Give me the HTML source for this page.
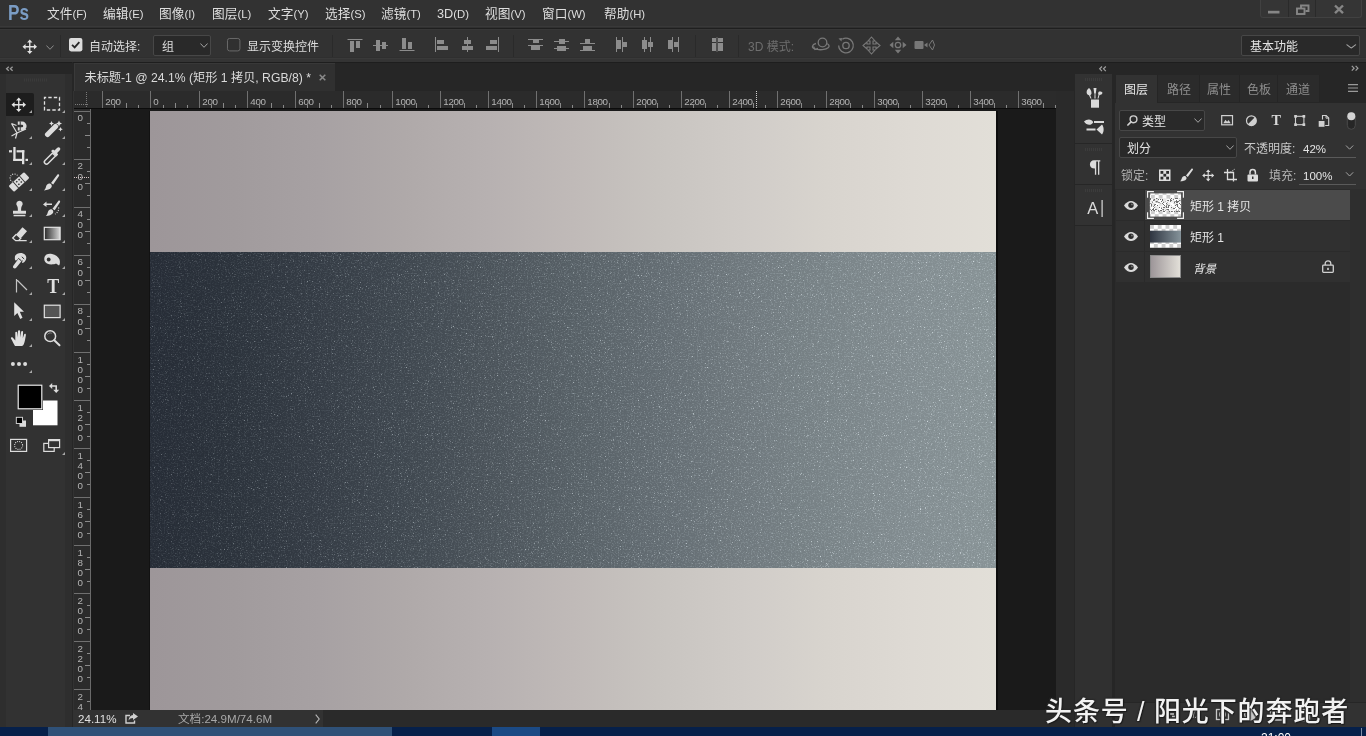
<!DOCTYPE html>
<html lang="zh-CN">
<head>
<meta charset="utf-8">
<title>Photoshop</title>
<style>
*{box-sizing:border-box;margin:0;padding:0}
html,body{width:1366px;height:736px;overflow:hidden;background:#323232}
body{position:relative;font-family:"Liberation Sans","Noto Sans CJK SC",sans-serif;font-size:12px;color:#d6d6d6;line-height:1}
.abs,.abs div,.abs svg,.abs i,.abs b,.abs span{position:absolute}
svg{display:block;overflow:visible}
.t{white-space:nowrap;line-height:16px;height:16px}
body>div{will-change:transform}
/* ===== menu bar ===== */
#menubar{left:0;top:0;width:1366px;height:28px;background:linear-gradient(180deg,#323232 0 26px,#393939 26px 27px,#303030 27px)}
#menubar .ps{left:7.500px;top:.5px;font-size:22px;font-weight:bold;color:#7a9cc4;line-height:24px;transform:scaleX(.78);transform-origin:0 0}
#menubar .mi{top:5.5px;font-size:12.7px;color:#dedede}
#menubar .mi small{font-size:11.3px}
#winctl{left:1260px;top:0;width:102px;height:18px;background:#353535;border:1px solid #414141;border-top:none;border-radius:0 0 3px 3px}
#winctl i{top:0;width:1px;height:17px;background:#2a2a2a}
/* ===== options bar ===== */
#optbar{left:0;top:28px;width:1366px;height:34px;background:linear-gradient(180deg,#373737 0 1px,#323232 1px 28px,#2f2f2f 28px 29px,#393939 29px 30px,#343434 30px);border-top:1px solid #1f1f1f}
#optbar .sep{top:6px;width:1px;height:22px;background:#2a2a2a;border-right:0}
#optbar .lbl{top:10px;font-size:12px;color:#dcdcdc}
.dd{background:#292929;border:1px solid #474747;border-radius:2px}
/* ===== tools ===== */
#tools{left:0;top:62px;width:73px;height:665px;background:#323232}
#tools .hdr{left:0;top:0;width:73px;height:12px;background:#262626;border-top:1px solid #1e1e1e}
#tools .sel{left:4px;top:31px;width:30px;height:23px;background:#1d1d1d;border-radius:2px}
/* ===== doc area ===== */
#tabwell{left:73px;top:62px;width:1001px;height:29px;background:#262626;border-top:1px solid #1e1e1e}
#tab{left:74px;top:63px;width:261px;height:28px;background:#303030;border-left:1px solid #3a3a3a;border-top:1px solid #383838}
#tab .t{left:9.5px;top:5.5px;font-size:12.2px;color:#dadada}
#hruler{left:74px;top:91px;width:982px;height:18px;background:#2b2b2b;overflow:hidden;border-bottom:1px solid #0c0c0c}
#vruler{left:74px;top:109px;width:17px;height:601px;background:#2b2b2b;overflow:hidden;border-right:1px solid #6a6a6a}
#hruler b,#vruler b{background:#8a8a8a;display:block}
#hruler span,#vruler span{font-size:9.8px;color:#b4b4b4;line-height:10px;font-weight:normal;letter-spacing:-.35px}
#canvas{left:91px;top:109px;width:965px;height:601px;background:#1a1a1a}
#doc{left:150px;top:111px;width:846px;height:599px;box-shadow:2px 0 0 #0d0d0d,-1px 0 0 #121212;background:linear-gradient(90deg,#9d9699 0%,#a19b9d 10%,#a7a1a3 20%,#afa9a9 30%,#b7b1b1 40%,#c0bab8 50%,#c8c4c0 60%,#d0ccc8 70%,#d8d4ce 80%,#dedad4 90%,#e2dfd8 100%)}
#band{left:0;top:141px;width:846px;height:316px;background:linear-gradient(90deg,#262c36 0%,#2c333c 10%,#353c45 20%,#3f474f 30%,#4b535a 40%,#576066 50%,#636c72 60%,#6f787d 70%,#798387 80%,#828c90 90%,#889396 100%)}
#vscroll{left:1056px;top:91px;width:18px;height:619px;background:#2a2a2a}
#status{left:74px;top:709.5px;width:1000px;height:17.5px;background:#2a2a2a}
#status .lt{left:0;top:0;width:249px;height:17px;background:#323232}
#status .t{font-size:11.6px;top:1px}
/* ===== right ===== */
#rwell{left:1074px;top:62px;width:292px;height:665px;background:#262626;border-top:1px solid #1e1e1e}
#icol{left:1075px;top:74px;width:37px;height:653px;background:#303030}
#icol .g{left:0;width:37px;background:#323232;border-bottom:1px solid #262626}
#icol .grip{left:10px;top:4px;width:17px;height:3px;background:repeating-linear-gradient(90deg,#3c3c3c 0 1px,transparent 1px 2px)}
#lpanel{left:1115px;top:74px;width:251px;height:653px;background:#2b2b2b}
#lpanel .tabs{left:0;top:0;width:251px;height:29px;background:#262626}
#lpanel .tb{top:1px;height:27px;background:#2b2b2b;border-right:1px solid #252525}
#lpanel .tb.on{background:#323232;height:28px}
#lpanel .tb .t{top:6.5px;font-size:12px;color:#8e8e8e}
#lpanel .tb.on .t{color:#e6e6e6}
#lpanel .ctl{left:0;top:29px;width:251px;height:86px;background:#323232}
#lpanel .lbl{font-size:12px;color:#c8c8c8}
#lpanel .row{left:1px;width:234px;height:30px;background:#303030}
#lpanel .row .eye{left:0;top:0;width:29px;height:30px;border-right:1px solid #2a2a2a}
#lpanel .row .nm{left:74px;top:9px;font-size:12px;color:#e4e4e4}
#lpanel .row.on{background:linear-gradient(90deg,#303030 0 29px,#4b4b4b 29px)}
#lpanel .sb{left:235px;top:115px;width:16px;height:513px;background:#2e2e2e}
#lpanel .foot{left:0;top:628px;width:251px;height:25px;background:#323232;border-top:1px solid #262626}
/* ===== taskbar ===== */
#taskbar{left:0;top:727px;width:1366px;height:9px;background:#06204a}
#wm{left:1044.500px;top:695.800px;font-size:27px;letter-spacing:.9px;line-height:32px;font-weight:500;color:#f2f2f2;white-space:nowrap;text-shadow:1px 1px 1px #1a1a1a,-1px -1px 1px #2a2a2a,1px -1px 1px #2a2a2a,-1px 1px 1px #2a2a2a}
</style>
</head>
<body>
<div id="menubar" class="abs">
  <div class="ps">Ps</div>
  <div class="mi t" style="left:47px">文件<small>(F)</small></div>
  <div class="mi t" style="left:103px">编辑<small>(E)</small></div>
  <div class="mi t" style="left:159px">图像<small>(I)</small></div>
  <div class="mi t" style="left:212px">图层<small>(L)</small></div>
  <div class="mi t" style="left:268px">文字<small>(Y)</small></div>
  <div class="mi t" style="left:325px">选择<small>(S)</small></div>
  <div class="mi t" style="left:381px">滤镜<small>(T)</small></div>
  <div class="mi t" style="left:437px">3D<small>(D)</small></div>
  <div class="mi t" style="left:485px">视图<small>(V)</small></div>
  <div class="mi t" style="left:542px">窗口<small>(W)</small></div>
  <div class="mi t" style="left:604px">帮助<small>(H)</small></div>
</div>
<div id="winctl" class="abs">
  <i style="left:27px"></i><i style="left:54px"></i>
  <svg style="left:-1px;top:0" width="103" height="18" viewBox="0 0 103 18">
    <rect x="8" y="10.800" width="11.500" height="2.700" fill="#868686"/>
    <g fill="none" stroke="#868686" stroke-width="1.900">
      <rect x="37" y="8.500" width="7.500" height="5.500"/>
      <path d="M41 8V5.500h7.500v5.500h-3"/>
    </g>
    <path d="M75 5.500l8 7.600M83 5.500l-8 7.600" stroke="#868686" stroke-width="2.400" fill="none"/>
  </svg>
</div>
<svg width="0" height="0" style="position:absolute">
  <defs>
    <symbol id="mv" viewBox="0 0 16 16"><path d="M8 .5l2.800 3.200h-2.100v3.600h3.600v-2.100L15.500 8l-3.200 2.800v-2.100h-3.600v3.600h2.100L8 15.500l-2.800-3.200h2.100v-3.600h-3.600v2.100L.5 8l3.200-2.800v2.100h3.600v-3.600h-2.100z"/></symbol>
    <symbol id="chev" viewBox="0 0 8 5"><path d="M.4.500L4 4.300 7.600.500" fill="none" stroke-width="1"/></symbol>
    <symbol id="eye" viewBox="0 0 14 9"><path d="M0 4.500C2 1.500 4.500 0 7 0s5 1.500 7 4.500C12 7.500 9.500 9 7 9S2 7.500 0 4.500z" fill="#dadada"/><circle cx="7" cy="4.300" r="2.700" fill="#2c2c2c"/><circle cx="7.900" cy="3.400" r=".9" fill="#777"/></symbol>
  </defs>
</svg>
<div id="optbar" class="abs">
  <svg style="left:22px;top:9.500px" width="15.500" height="15.500" fill="#e2e2e2"><use href="#mv"/></svg>
  <svg style="left:45.500px;top:16px" width="8" height="5" stroke="#8c8c8c"><use href="#chev"/></svg>
  <div class="sep" style="left:60px"></div>
  <svg style="left:68.800px;top:9px" width="13.400" height="13.400" viewBox="0 0 14 14"><rect width="14" height="14" rx="2.200" fill="#dcdcdc"/><path d="M3.200 7.200l2.700 2.700 4.900-5.600" fill="none" stroke="#262626" stroke-width="1.900"/></svg>
  <div class="lbl t" style="left:89px">自动选择:</div>
  <div class="dd" style="left:153px;top:6px;width:58px;height:21px"></div>
  <div class="lbl t" style="left:162px">组</div>
  <svg style="left:199.500px;top:14px" width="8" height="5" stroke="#a4a4a4"><use href="#chev"/></svg>
  <svg style="left:227px;top:9px" width="13.400" height="13.400" viewBox="0 0 14 14"><rect x=".5" y=".5" width="13" height="13" rx="2.200" fill="#303030" stroke="#6c6c6c"/></svg>
  <div class="lbl t" style="left:247px">显示变换控件</div>
  <div class="sep" style="left:332px"></div>
  <svg style="left:0;top:0" width="960" height="34" viewBox="0 29 960 34" fill="#8c8c8c">
    <!-- align top / vcenter / bottom -->
    <rect x="347.500" y="39" width="15" height="1"/><rect x="350" y="41" width="4" height="11"/><rect x="356" y="41" width="4" height="7"/>
    <rect x="373" y="45" width="15" height="1"/><rect x="376" y="40" width="4" height="11"/><rect x="382" y="42" width="4" height="7"/>
    <rect x="399.500" y="50" width="15" height="1"/><rect x="402" y="38" width="4" height="11"/><rect x="408" y="42" width="4" height="7"/>
    <!-- align left / hcenter / right -->
    <rect x="435" y="37" width="1" height="15"/><rect x="437" y="40" width="7" height="4"/><rect x="437" y="46" width="11" height="4"/>
    <rect x="467" y="37" width="1" height="15"/><rect x="464" y="40" width="7" height="4"/><rect x="462" y="46" width="11" height="4"/>
    <rect x="498" y="37" width="1" height="15"/><rect x="490" y="40" width="7" height="4"/><rect x="486" y="46" width="11" height="4"/>
    <!-- distribute top / vcenter / bottom -->
    <rect x="528" y="39" width="15" height="1"/><rect x="533" y="40" width="6" height="3"/><rect x="528" y="45" width="15" height="1"/><rect x="531" y="46" width="9" height="4"/>
    <rect x="554" y="41" width="15" height="1"/><rect x="559" y="39" width="6" height="5"/><rect x="554" y="48" width="15" height="1"/><rect x="557" y="46" width="9" height="5"/>
    <rect x="580" y="43" width="15" height="1"/><rect x="585" y="39" width="5" height="4"/><rect x="580" y="50" width="15" height="1"/><rect x="583" y="46" width="9" height="4"/>
    <!-- distribute left / hcenter / right -->
    <rect x="616" y="37" width="1" height="15"/><rect x="617" y="40" width="4" height="9"/><rect x="622" y="37" width="1" height="15"/><rect x="623" y="42" width="4" height="5"/>
    <rect x="644" y="37" width="1" height="15"/><rect x="642" y="40" width="5" height="9"/><rect x="650" y="37" width="1" height="15"/><rect x="648" y="42" width="5" height="5"/>
    <rect x="672" y="37" width="1" height="15"/><rect x="668" y="40" width="4" height="9"/><rect x="678" y="37" width="1" height="15"/><rect x="674" y="42" width="4" height="5"/>
    <!-- auto-align -->
    <rect x="712" y="38" width="4" height="4"/><rect x="718" y="38" width="5" height="4"/><rect x="712" y="43" width="4" height="8"/><rect x="718" y="43" width="5" height="8"/><rect x="716.500" y="37" width="1" height="15" fill="#6a6a6a"/>
    <!-- 3D icons (disabled) -->
    <g fill="none" stroke="#787878" stroke-width="1.300">
      <circle cx="822.500" cy="42.500" r="4.300"/><path d="M816 43.500c-4 1-5 4-1 5.500 4 1.300 11 1 13.500-1.500 1.500-1.600 0-3.300-2-4"/><path d="M813.500 46.500l1.500 3 3-1.200" />
      <circle cx="846" cy="45.500" r="7.300" stroke-dasharray="38 8" transform="rotate(-120 846 45.500)"/><circle cx="846" cy="45.500" r="3.200"/><path d="M838.500 38.500l3.500-.5-.5 3.500z" fill="#787878" stroke="none"/>
      <circle cx="898" cy="45" r="2.700"/>
    </g>
    <g fill="#787878">
      <path d="M871.500 37l3.500 4h-2v3h3v-2l4 3.500-4 3.500v-2h-3v3h2l-3.500 4-3.500-4h2v-3h-3v2l-4-3.500 4-3.500v2h3v-3h-2z" fill="none" stroke="#787878" stroke-width="1.100"/>
      <path d="M898 36.500l3.200 3.800h-6.400zM898 53.500l3.200-3.800h-6.400zM889.500 45l3.800-3.200v6.400zM906.500 45l-3.800-3.200v6.400z"/>
      <rect x="914.500" y="41" width="9" height="8" rx="1"/><path d="M924 45l3.500-2.500v5z"/><path d="M929 45l3.500-5 2 5-2 5z" fill="none" stroke="#787878" stroke-width="1"/>
    </g>
  </svg>
  <div class="sep" style="left:513px"></div>
  <div class="sep" style="left:695px"></div>
  <div class="sep" style="left:738px"></div>
  <div class="lbl t" style="left:748px;color:#6e6e6e">3D 模式:</div>
  <div class="dd" style="left:1241px;top:6px;width:119px;height:21px"></div>
  <div class="lbl t" style="left:1250px;color:#e4e4e4">基本功能</div>
  <svg style="left:1346px;top:14.500px" width="10.500" height="4.800" viewBox="0 0 8 5" preserveAspectRatio="none" stroke="#a4a4a4"><use href="#chev"/></svg>
</div>
<div id="tools" class="abs">
  <div class="hdr"></div>
  <div class="sel"></div>
  <div style="left:0;top:12px;width:6px;height:653px;background:#2e2e2e"></div>
  <div style="left:65px;top:12px;width:7px;height:653px;background:#2e2e2e"></div>
  <div style="left:72px;top:0;width:1px;height:665px;background:#262626"></div>
  <svg style="left:0;top:0" width="73" height="665" viewBox="0 62 73 665">
    <!-- collapse arrows -->
    <path d="M8.800 66.800l-2.200 2 2.200 2M12.600 66.800l-2.200 2 2.200 2" fill="none" stroke="#9a9a9a" stroke-width="1.300"/>
    <!-- grip -->
    <g fill="#3a3a3a" transform="translate(0 1.500)"><rect x="24" y="77" width="1" height="3"/><rect x="26" y="77" width="1" height="3"/><rect x="28" y="77" width="1" height="3"/><rect x="30" y="77" width="1" height="3"/><rect x="32" y="77" width="1" height="3"/><rect x="34" y="77" width="1" height="3"/><rect x="36" y="77" width="1" height="3"/><rect x="38" y="77" width="1" height="3"/><rect x="40" y="77" width="1" height="3"/><rect x="42" y="77" width="1" height="3"/><rect x="44" y="77" width="1" height="3"/><rect x="46" y="77" width="1" height="3"/></g>
    <!-- flyout triangles -->
    <g fill="#a8a8a8">
      <path d="M32 110v3h-3zM65 110v3h-3zM32 136v3h-3zM65 136v3h-3zM32 162v3h-3zM65 162v3h-3zM32 188v3h-3zM65 188v3h-3zM32 214v3h-3zM65 214v3h-3zM32 240v3h-3zM65 240v3h-3zM32 266v3h-3zM65 266v3h-3zM32 292v3h-3zM65 292v3h-3zM32 318v3h-3zM65 318v3h-3zM32 344v3h-3zM32 370v3h-3zM65 452v3h-3z"/>
    </g>
    <!-- row1: move, marquee -->
    <use href="#mv" x="11" y="97" width="15.500" height="15.500" fill="#e4e4e4"/>
    <rect x="44.500" y="97.500" width="15" height="12.500" fill="none" stroke="#e0e0e0" stroke-width="1.300" stroke-dasharray="3.400 2.100" stroke-dashoffset="1.700"/>
    <!-- row2: magnetic lasso, magic wand -->
    <g fill="none" stroke="#dcdcdc" stroke-width="1.200">
      <path d="M11.500 123.500l5.500 9.500M11.500 123.500l5 2M17 133l-5.500 3M17 133l-1.500 5.500M17 133l9-4"/>
    </g>
    <path d="M17.800 121.600h4.400a4.400 4.400 0 0 1 0 8.800h-4.400v-3.200h4.200a1.200 1.200 0 0 0 0-2.400h-4.200z" fill="#dcdcdc"/>
    <path d="M20.200 121.300v3.800M20.200 126.900v3.800" stroke="#323232" stroke-width="1"/>
    <path d="M45.800 136.200c-1.300-1.300-1.300-2.300-.3-3.300l8.500-8.500c1-1 2-1 3.300.3s1.300 2.300.3 3.300l-8.500 8.500c-1 1-2 1-3.300-.3z" fill="#dcdcdc"/>
    <path d="M51.500 121l.8 1.700 1.700.8-1.700.8-.8 1.700-.8-1.700-1.700-.8 1.700-.8zM59 120.500l.9 2.100 2.100.9-2.100.9-.9 2.100-.9-2.100-2.100-.9 2.100-.9zM60.500 127l.7 1.600 1.600.7-1.600.7-.7 1.600-.7-1.600-1.600-.7 1.600-.7z" fill="#dcdcdc"/>
    <!-- row3: crop, eyedropper -->
    <g fill="#e0e0e0">
      <rect x="13.300" y="147" width="2.300" height="14"/><rect x="13.300" y="158.800" width="10.700" height="2.200"/><rect x="9" y="150.200" width="3" height="2.200"/>
      <rect x="16.600" y="150.200" width="7.700" height="2.200"/><rect x="22" y="150.200" width="2.300" height="14"/><rect x="25.500" y="158.800" width="2.500" height="2.200"/>
    </g>
    <path d="M45 163.500c-1-1-1-2 0-3l7.500-7.500 3 3-7.500 7.500c-1 1-2 1-3 0z" fill="none" stroke="#dcdcdc" stroke-width="1.500"/>
    <path d="M51 151l2-1.500 1.500 1 2.500-2.500c1-1 2.200-.8 2.800-.2s.8 1.800-.2 2.800l-2.500 2.500 1 1.500-1.500 2z" fill="#dcdcdc"/>
    <!-- row4: healing brush, brush -->
    <g transform="rotate(-42 19 182)">
      <rect x="8.500" y="178" width="21" height="8" rx="1.200" fill="#dcdcdc"/>
      <rect x="14.200" y="177.500" width="1" height="9" fill="#323232"/><rect x="22.800" y="177.500" width="1" height="9" fill="#323232"/>
      <g fill="#323232"><rect x="16.700" y="179.600" width="1.500" height="1.500"/><rect x="19.900" y="179.600" width="1.500" height="1.500"/><rect x="16.700" y="182.800" width="1.500" height="1.500"/><rect x="19.900" y="182.800" width="1.500" height="1.500"/></g>
    </g>
    <path d="M17.500 175.500a4.200 4.200 0 1 0-5 6.500" fill="none" stroke="#dcdcdc" stroke-width="1.100" stroke-dasharray="1 1.300"/>
    <path d="M58.800 174.500c.5.400.5 1 .2 1.500l-5.800 8.500-2.200-1.500 6.300-8.300c.4-.5 1-.6 1.500-.2z" fill="#dcdcdc"/>
    <path d="M50.500 183.800c1.300.9 1.800 2.300.8 3.800-1.200 1.800-4 2.800-7.300 2.800 1.600-1.400 1.800-3 2.300-4.600.6-1.900 2.700-3 4.200-2z" fill="#dcdcdc"/>
    <!-- row5: stamp, history brush -->
    <path d="M19.500 200.700a3.200 3.200 0 0 1 2.400 5.300c-.6.800-.8 2-.8 4.700h4.900v3h-13v-3h4.900c0-2.700-.2-3.900-.8-4.700a3.200 3.200 0 0 1 2.400-5.300z" fill="#dcdcdc"/>
    <rect x="13.600" y="214.800" width="11.800" height="1.500" fill="#dcdcdc"/>
    <path d="M59.800 200.800c.5.400.5 1 .2 1.500l-5.300 8-2.200-1.500 5.800-7.800c.4-.5 1-.6 1.500-.2z" fill="#dcdcdc"/>
    <path d="M52 209.600c1.300.9 1.800 2.300.8 3.700-1.100 1.600-3.800 2.700-7 2.700 1.500-1.300 1.700-2.800 2.200-4.300.6-1.800 2.600-3 4-2.100z" fill="#dcdcdc"/>
    <path d="M43 204.500l3.500-3v2h5.500v1.600h-5.500v2z" fill="#dcdcdc"/>
    <path d="M58.500 207.500c.6 2.500-.8 5-3.500 6.500" fill="none" stroke="#dcdcdc" stroke-width="1.200" stroke-dasharray="1 1.400"/>
    <!-- row6: eraser, gradient -->
    <path d="M22.500 227.200l4.500 4-6.200 7-4.500-4z" fill="#dcdcdc"/>
    <path d="M16.300 234.200l-3.600 3.800 3 2.700h11" fill="none" stroke="#dcdcdc" stroke-width="1.300"/>
    <path d="M16.300 234.200l4.500 4-2.200 2.400" fill="none" stroke="#dcdcdc" stroke-width="1.300"/>
    <defs><linearGradient id="tg" x1="0" x2="1" y1="0" y2="0"><stop offset="0" stop-color="#2a2a2a"/><stop offset="1" stop-color="#d8d8d8"/></linearGradient></defs>
    <rect x="44.300" y="227.300" width="15.800" height="12.400" fill="url(#tg)" stroke="#e4e4e4" stroke-width="1.200"/>
    <!-- row7: smudge, sponge -->
    <path d="M15 256c1.500-2.500 5-3.500 8-2.500s3.800 3.500 3 6c-.7 2-2.300 3.300-4 3.500l.7-3.200-6.500 8c-.8.900-2 .9-2.700.2s-.7-1.700 0-2.600l5.500-7.400-2.800 2.500c-1 .5-1.700-1-1.200-4.500z" fill="#dcdcdc"/>
    <path d="M18.300 258.300l3.200 2.600M21.800 256.800l2.400 2.200" stroke="#323232" stroke-width="1" fill="none"/>
    <path d="M44.500 257c.8-2.500 4-3.800 7.500-3s6.500 3 7.500 5.500c.8 2 .5 5-.5 6l-3-2c-2 1-6 1.500-9 0-2.500-1.300-3.200-4-2.500-6.500z" fill="#dcdcdc"/>
    <circle cx="48.700" cy="259.500" r="1.900" fill="#323232"/>
    <!-- row8: convert point, type -->
    <path d="M16.500 279v13.500M16.500 279.500l10.500 10.500" fill="none" stroke="#c4c4c4" stroke-width="1.200"/>
    <text transform="translate(53.100 293) scale(.86 1)" text-anchor="middle" font-family="Liberation Serif,serif" font-weight="bold" font-size="20.800" fill="#e0e0e0">T</text>
    <!-- row9: path select, rectangle -->
    <path d="M14.200 302.300l9.800 9.500h-4.200l2.700 6-2.300 1.200-2.800-6.100-3.200 3z" fill="#e0e0e0"/>
    <rect x="44.300" y="305.200" width="15.800" height="12.400" fill="#555" stroke="#e4e4e4" stroke-width="1.200"/>
    <!-- row10: hand, zoom -->
    <path d="M15 346c-1-1.500-2.500-5-4-7.500-.5-1 .8-1.800 1.700-.9l2.600 3v-8c0-1.200 1.800-1.200 1.900 0l.5 5 .3-6.500c.1-1.300 2-1.300 2.100 0l.2 6.400.8-5.600c.2-1.200 2-1 2 .2l-.3 6.200 1.300-3.800c.4-1.100 2-.7 1.800.5-.5 3-1 6.500-2 9-.4.900-1 1.600-1.800 2z" fill="#e0e0e0"/>
    <circle cx="50.200" cy="336.200" r="5.400" fill="none" stroke="#dcdcdc" stroke-width="1.500"/>
    <path d="M54.300 340.300l5.200 5" stroke="#dcdcdc" stroke-width="2" stroke-linecap="round"/>
    <path d="M47.500 334.500c.8-1.300 2.500-2 4.200-1.300" fill="none" stroke="#8a8a8a" stroke-width="1"/>
    <!-- more -->
    <circle cx="12.900" cy="364" r="2" fill="#dcdcdc"/><circle cx="19" cy="364" r="2" fill="#dcdcdc"/><circle cx="25.100" cy="364" r="2" fill="#dcdcdc"/>
    <!-- swatches -->
    <rect x="33" y="400.500" width="24.500" height="24.800" fill="#fff"/>
    <rect x="17" y="384" width="26" height="26" fill="#2a2a2a"/>
    <rect x="18.200" y="385.200" width="23.600" height="23.600" fill="#000" stroke="#ececec" stroke-width="1.200"/>
    <path d="M49 386l3.200-3v2.200h4.800v4.600h2.200l-3 3.200-3-3.200h2.200v-3h-3.200v2.200z" fill="#dcdcdc"/>
    <rect x="19.500" y="420.500" width="6.500" height="6.300" fill="#dcdcdc"/>
    <rect x="16.300" y="417.300" width="6.200" height="6.200" fill="#000" stroke="#dcdcdc" stroke-width=".9"/>
    <!-- quick mask / screen mode -->
    <rect x="10.600" y="439.400" width="16" height="12" fill="none" stroke="#dcdcdc" stroke-width="1.200"/>
    <circle cx="18.600" cy="445.400" r="4" fill="none" stroke="#dcdcdc" stroke-width="1.100" stroke-dasharray="1 1.100"/>
    <rect x="43.800" y="443.400" width="10.400" height="8" fill="none" stroke="#dcdcdc" stroke-width="1.200"/>
    <rect x="48.600" y="439.600" width="11" height="8" fill="#323232" stroke="#dcdcdc" stroke-width="1.200"/>
    <rect x="48.600" y="439.600" width="11" height="1.600" fill="#dcdcdc"/>
  </svg>
</div>
<div id="tabwell" class="abs"></div>
<div id="tab" class="abs"><div class="t">未标题-1 @ 24.1% (矩形 1 拷贝, RGB/8) *</div><svg style="left:244px;top:10px" width="7" height="7" viewBox="0 0 7 7"><path d="M.7.700l5.600 5.600M6.300.700L.7 6.300" stroke="#8a8a8a" stroke-width="1.500" fill="none"/></svg></div>
<div id="hruler" class="abs"><i style="left:0;top:0;width:17px;height:17px;background:#2b2b2b"></i><i style="left:1px;top:13px;width:14px;height:1px;background:repeating-linear-gradient(90deg,#7a7a7a 0 1px,transparent 1px 2px)"></i><i style="left:12px;top:1px;width:1px;height:15px;background:repeating-linear-gradient(180deg,#7a7a7a 0 1px,transparent 1px 2px)"></i><b style="left:28.0px;top:0;width:1px;height:17px;background:#707070"></b><span style="left:31.3px;top:5.6px">200</span><b style="left:40px;top:14px;width:1px;height:3px"></b><b style="left:52px;top:12px;width:1px;height:5px"></b><b style="left:64px;top:14px;width:1px;height:3px"></b><b style="left:76.0px;top:0;width:1px;height:17px;background:#707070"></b><span style="left:79.3px;top:5.6px">0</span><b style="left:89px;top:14px;width:1px;height:3px"></b><b style="left:101px;top:12px;width:1px;height:5px"></b><b style="left:113px;top:14px;width:1px;height:3px"></b><b style="left:125.0px;top:0;width:1px;height:17px;background:#707070"></b><span style="left:128.3px;top:5.6px">200</span><b style="left:137px;top:14px;width:1px;height:3px"></b><b style="left:149px;top:12px;width:1px;height:5px"></b><b style="left:161px;top:14px;width:1px;height:3px"></b><b style="left:173.0px;top:0;width:1px;height:17px;background:#707070"></b><span style="left:176.3px;top:5.6px">400</span><b style="left:185px;top:14px;width:1px;height:3px"></b><b style="left:197px;top:12px;width:1px;height:5px"></b><b style="left:209px;top:14px;width:1px;height:3px"></b><b style="left:221.0px;top:0;width:1px;height:17px;background:#707070"></b><span style="left:224.3px;top:5.6px">600</span><b style="left:233px;top:14px;width:1px;height:3px"></b><b style="left:245px;top:12px;width:1px;height:5px"></b><b style="left:257px;top:14px;width:1px;height:3px"></b><b style="left:269.0px;top:0;width:1px;height:17px;background:#707070"></b><span style="left:272.3px;top:5.6px">800</span><b style="left:281px;top:14px;width:1px;height:3px"></b><b style="left:293px;top:12px;width:1px;height:5px"></b><b style="left:306px;top:14px;width:1px;height:3px"></b><b style="left:318.0px;top:0;width:1px;height:17px;background:#707070"></b><span style="left:321.3px;top:5.6px">1000</span><b style="left:330px;top:14px;width:1px;height:3px"></b><b style="left:342px;top:12px;width:1px;height:5px"></b><b style="left:354px;top:14px;width:1px;height:3px"></b><b style="left:366.0px;top:0;width:1px;height:17px;background:#707070"></b><span style="left:369.3px;top:5.6px">1200</span><b style="left:378px;top:14px;width:1px;height:3px"></b><b style="left:390px;top:12px;width:1px;height:5px"></b><b style="left:402px;top:14px;width:1px;height:3px"></b><b style="left:414.0px;top:0;width:1px;height:17px;background:#707070"></b><span style="left:417.3px;top:5.6px">1400</span><b style="left:426px;top:14px;width:1px;height:3px"></b><b style="left:438px;top:12px;width:1px;height:5px"></b><b style="left:450px;top:14px;width:1px;height:3px"></b><b style="left:462.0px;top:0;width:1px;height:17px;background:#707070"></b><span style="left:465.3px;top:5.6px">1600</span><b style="left:474px;top:14px;width:1px;height:3px"></b><b style="left:486px;top:12px;width:1px;height:5px"></b><b style="left:498px;top:14px;width:1px;height:3px"></b><b style="left:510.0px;top:0;width:1px;height:17px;background:#707070"></b><span style="left:513.3px;top:5.6px">1800</span><b style="left:523px;top:14px;width:1px;height:3px"></b><b style="left:535px;top:12px;width:1px;height:5px"></b><b style="left:547px;top:14px;width:1px;height:3px"></b><b style="left:559.0px;top:0;width:1px;height:17px;background:#707070"></b><span style="left:562.3px;top:5.6px">2000</span><b style="left:571px;top:14px;width:1px;height:3px"></b><b style="left:583px;top:12px;width:1px;height:5px"></b><b style="left:595px;top:14px;width:1px;height:3px"></b><b style="left:607.0px;top:0;width:1px;height:17px;background:#707070"></b><span style="left:610.3px;top:5.6px">2200</span><b style="left:619px;top:14px;width:1px;height:3px"></b><b style="left:631px;top:12px;width:1px;height:5px"></b><b style="left:643px;top:14px;width:1px;height:3px"></b><b style="left:655.0px;top:0;width:1px;height:17px;background:#707070"></b><span style="left:658.3px;top:5.6px">2400</span><b style="left:667px;top:14px;width:1px;height:3px"></b><b style="left:679px;top:12px;width:1px;height:5px"></b><b style="left:691px;top:14px;width:1px;height:3px"></b><b style="left:703.0px;top:0;width:1px;height:17px;background:#707070"></b><span style="left:706.3px;top:5.6px">2600</span><b style="left:715px;top:14px;width:1px;height:3px"></b><b style="left:727px;top:12px;width:1px;height:5px"></b><b style="left:740px;top:14px;width:1px;height:3px"></b><b style="left:752.0px;top:0;width:1px;height:17px;background:#707070"></b><span style="left:755.3px;top:5.6px">2800</span><b style="left:764px;top:14px;width:1px;height:3px"></b><b style="left:776px;top:12px;width:1px;height:5px"></b><b style="left:788px;top:14px;width:1px;height:3px"></b><b style="left:800.0px;top:0;width:1px;height:17px;background:#707070"></b><span style="left:803.3px;top:5.6px">3000</span><b style="left:812px;top:14px;width:1px;height:3px"></b><b style="left:824px;top:12px;width:1px;height:5px"></b><b style="left:836px;top:14px;width:1px;height:3px"></b><b style="left:848.0px;top:0;width:1px;height:17px;background:#707070"></b><span style="left:851.3px;top:5.6px">3200</span><b style="left:860px;top:14px;width:1px;height:3px"></b><b style="left:872px;top:12px;width:1px;height:5px"></b><b style="left:884px;top:14px;width:1px;height:3px"></b><b style="left:896.0px;top:0;width:1px;height:17px;background:#707070"></b><span style="left:899.3px;top:5.6px">3400</span><b style="left:908px;top:14px;width:1px;height:3px"></b><b style="left:920px;top:12px;width:1px;height:5px"></b><b style="left:932px;top:14px;width:1px;height:3px"></b><b style="left:944.0px;top:0;width:1px;height:17px;background:#707070"></b><span style="left:947.3px;top:5.6px">3600</span><b style="left:957px;top:14px;width:1px;height:3px"></b><b style="left:969px;top:12px;width:1px;height:5px"></b><b style="left:981px;top:14px;width:1px;height:3px"></b><i style="left:682px;top:0;width:1px;height:17px;background:repeating-linear-gradient(180deg,#d0d0d0 0 1px,transparent 1px 2px)"></i></div>
<div id="vruler" class="abs"><b style="left:0;top:2px;width:16px;height:1px;background:#707070"></b><span style="left:3.5px;top:4.3px">0</span><b style="left:13px;top:14px;width:3px;height:1px"></b><b style="left:11px;top:26px;width:5px;height:1px"></b><b style="left:13px;top:38px;width:3px;height:1px"></b><b style="left:0;top:50px;width:16px;height:1px;background:#707070"></b><span style="left:3.5px;top:52.3px">2</span><span style="left:3.5px;top:62.7px">0</span><span style="left:3.5px;top:73.1px">0</span><b style="left:13px;top:62px;width:3px;height:1px"></b><b style="left:11px;top:74px;width:5px;height:1px"></b><b style="left:13px;top:86px;width:3px;height:1px"></b><b style="left:0;top:98px;width:16px;height:1px;background:#707070"></b><span style="left:3.5px;top:100.3px">4</span><span style="left:3.5px;top:110.7px">0</span><span style="left:3.5px;top:121.1px">0</span><b style="left:13px;top:110px;width:3px;height:1px"></b><b style="left:11px;top:122px;width:5px;height:1px"></b><b style="left:13px;top:134px;width:3px;height:1px"></b><b style="left:0;top:146px;width:16px;height:1px;background:#707070"></b><span style="left:3.5px;top:148.3px">6</span><span style="left:3.5px;top:158.7px">0</span><span style="left:3.5px;top:169.1px">0</span><b style="left:13px;top:158px;width:3px;height:1px"></b><b style="left:11px;top:171px;width:5px;height:1px"></b><b style="left:13px;top:183px;width:3px;height:1px"></b><b style="left:0;top:195px;width:16px;height:1px;background:#707070"></b><span style="left:3.5px;top:197.3px">8</span><span style="left:3.5px;top:207.7px">0</span><span style="left:3.5px;top:218.1px">0</span><b style="left:13px;top:207px;width:3px;height:1px"></b><b style="left:11px;top:219px;width:5px;height:1px"></b><b style="left:13px;top:231px;width:3px;height:1px"></b><b style="left:0;top:243px;width:16px;height:1px;background:#707070"></b><span style="left:3.5px;top:245.8px">1</span><span style="left:3.5px;top:255.8px">0</span><span style="left:3.5px;top:265.8px">0</span><span style="left:3.5px;top:275.8px">0</span><b style="left:13px;top:255px;width:3px;height:1px"></b><b style="left:11px;top:267px;width:5px;height:1px"></b><b style="left:13px;top:279px;width:3px;height:1px"></b><b style="left:0;top:291px;width:16px;height:1px;background:#707070"></b><span style="left:3.5px;top:293.8px">1</span><span style="left:3.5px;top:303.8px">2</span><span style="left:3.5px;top:313.8px">0</span><span style="left:3.5px;top:323.8px">0</span><b style="left:13px;top:303px;width:3px;height:1px"></b><b style="left:11px;top:315px;width:5px;height:1px"></b><b style="left:13px;top:327px;width:3px;height:1px"></b><b style="left:0;top:339px;width:16px;height:1px;background:#707070"></b><span style="left:3.5px;top:341.8px">1</span><span style="left:3.5px;top:351.8px">4</span><span style="left:3.5px;top:361.8px">0</span><span style="left:3.5px;top:371.8px">0</span><b style="left:13px;top:351px;width:3px;height:1px"></b><b style="left:11px;top:363px;width:5px;height:1px"></b><b style="left:13px;top:375px;width:3px;height:1px"></b><b style="left:0;top:388px;width:16px;height:1px;background:#707070"></b><span style="left:3.5px;top:390.8px">1</span><span style="left:3.5px;top:400.8px">6</span><span style="left:3.5px;top:410.8px">0</span><span style="left:3.5px;top:420.8px">0</span><b style="left:13px;top:400px;width:3px;height:1px"></b><b style="left:11px;top:412px;width:5px;height:1px"></b><b style="left:13px;top:424px;width:3px;height:1px"></b><b style="left:0;top:436px;width:16px;height:1px;background:#707070"></b><span style="left:3.5px;top:438.8px">1</span><span style="left:3.5px;top:448.8px">8</span><span style="left:3.5px;top:458.8px">0</span><span style="left:3.5px;top:468.8px">0</span><b style="left:13px;top:448px;width:3px;height:1px"></b><b style="left:11px;top:460px;width:5px;height:1px"></b><b style="left:13px;top:472px;width:3px;height:1px"></b><b style="left:0;top:484px;width:16px;height:1px;background:#707070"></b><span style="left:3.5px;top:486.8px">2</span><span style="left:3.5px;top:496.8px">0</span><span style="left:3.5px;top:506.8px">0</span><span style="left:3.5px;top:516.8px">0</span><b style="left:13px;top:496px;width:3px;height:1px"></b><b style="left:11px;top:508px;width:5px;height:1px"></b><b style="left:13px;top:520px;width:3px;height:1px"></b><b style="left:0;top:532px;width:16px;height:1px;background:#707070"></b><span style="left:3.5px;top:534.8px">2</span><span style="left:3.5px;top:544.8px">2</span><span style="left:3.5px;top:554.8px">0</span><span style="left:3.5px;top:564.8px">0</span><b style="left:13px;top:544px;width:3px;height:1px"></b><b style="left:11px;top:556px;width:5px;height:1px"></b><b style="left:13px;top:568px;width:3px;height:1px"></b><b style="left:0;top:580px;width:16px;height:1px;background:#707070"></b><span style="left:3.5px;top:582.8px">2</span><span style="left:3.5px;top:592.8px">4</span><span style="left:3.5px;top:602.8px">0</span><span style="left:3.5px;top:612.8px">0</span><b style="left:13px;top:592px;width:3px;height:1px"></b><b style="left:11px;top:604px;width:5px;height:1px"></b><b style="left:13px;top:617px;width:3px;height:1px"></b><i style="left:0;top:68px;width:16px;height:1px;background:repeating-linear-gradient(90deg,#d8c8c8 0 1px,transparent 1px 2px)"></i></div>
<div id="canvas" class="abs"></div>
<div id="doc" class="abs"><div id="band"><svg style="left:0;top:0" width="846" height="316" viewBox="0 0 846 316"><defs><filter id="nz" x="0" y="0" width="1" height="1" color-interpolation-filters="sRGB"><feTurbulence type="fractalNoise" baseFrequency="0.85" numOctaves="2" seed="7"/><feColorMatrix values="0 0 0 0 0.84  0 0 0 0 0.88  0 0 0 0 0.9  4.2 0 0 0 -2.72"/><feGaussianBlur stdDeviation="0.45"/></filter><filter id="gr" x="0" y="0" width="1" height="1" color-interpolation-filters="sRGB"><feTurbulence type="fractalNoise" baseFrequency="0.7" numOctaves="1" seed="3"/><feColorMatrix values="0 0 0 0 0.8  0 0 0 0 0.86  0 0 0 0 0.88  0 0.9 0 0 -0.43"/></filter><linearGradient id="nzf" x1="0" x2="1" y1="0" y2="0"><stop offset="0" stop-color="#fff" stop-opacity=".4"/><stop offset="1" stop-color="#fff" stop-opacity="1"/></linearGradient><mask id="nzm"><rect width="846" height="316" fill="url(#nzf)"/></mask></defs><g mask="url(#nzm)"><rect width="846" height="316" filter="url(#gr)"/><rect width="846" height="316" filter="url(#nz)"/></g></svg></div></div>
<div id="vscroll" class="abs"></div>
<div id="status" class="abs"><div class="lt"></div>
  <div class="t" style="left:4px;color:#e0e0e0">24.11%</div>
  <svg style="left:51px;top:3px" width="13" height="11" viewBox="0 0 13 11"><path d="M5 2.500H1v7.500h8.500V7.500" fill="none" stroke="#d0d0d0" stroke-width="1.400"/><path d="M8 0l5 3.500L8 7V5C6 5 4.500 5.800 3.500 7.500 3.700 4.500 5.500 2.300 8 2z" fill="#d0d0d0"/></svg>
  <div class="t" style="left:104px;color:#a8a8a8">文档:24.9M/74.6M</div>
  <svg style="left:241px;top:3.500px" width="5" height="10" viewBox="0 0 5 10"><path d="M.7.700L4.200 5 .7 9.300" fill="none" stroke="#b8b8b8" stroke-width="1.100"/></svg>
</div>
<div id="rwell" class="abs"></div>
<div id="icol" class="abs">
  <div class="g" style="top:0;height:70px"><div class="grip"></div></div>
  <div class="g" style="top:70px;height:41px"><div class="grip"></div></div>
  <div class="g" style="top:111px;height:41px"><div class="grip"></div></div>
  <svg style="left:0;top:-12px" width="37" height="200" viewBox="1075 62 37 200">
    <path d="M1102 66.500l-2.300 2.300 2.300 2.300M1105.800 66.500l-2.300 2.300 2.300 2.300" fill="none" stroke="#a0a0a0" stroke-width="1.200"/>
    <!-- brushes in cup -->
    <g fill="#dadada">
      <rect x="1091" y="99.500" width="8" height="8.200"/>
      <path d="M1089 88c1.500 1.200 2.500 3 2.500 5 0 1-.5 1.800-1.200 2.200l1.200 3.300h-1l-1.500-3.200c-1.700-.3-2.700-2-2.300-4 .3-1.400 1.200-2.500 2.300-3.300z"/>
      <path d="M1093.500 88h3l-.7 5.500h-.4l.2 5h-1.200l.2-5h-.4z"/>
      <path d="M1099 91.500c1.500-.3 3 .3 3.500 1.200-.3 1.300-1.500 2.300-3 2.300l-1 3.500h-1l1-3.800c-.6-1-.4-2.300.5-3.200z"/>
    </g>
    <!-- brush settings -->
    <g fill="#dadada">
      <path d="M1084 121.500c2-1.800 5-2.800 7.500-1.300 1 .6 1.500 1.300 1.700 2-.2.800-.8 1.500-1.800 2-2.400 1.200-5.400.3-7.400-2.700z"/>
      <rect x="1094" y="121" width="10" height="2"/>
      <rect x="1086.500" y="128.500" width="9" height="2"/>
      <path d="M1096.500 129.500l5.500-5c2 2.800 2.300 6.800 0 10z"/>
    </g>
    <!-- paragraph -->
    <g fill="#dadada">
      <path d="M1094 160.300h6.300v1.300h-1v13.200h-1.300v-13.200h-1.800v13.200h-1.300v-6.300c-3.400 0-5-1.800-5-4.100s1.700-4.100 4.100-4.100z"/>
    </g>
    <!-- character -->
    <text x="1087.300" y="214" font-family="Liberation Sans,sans-serif" font-size="16.500" fill="#dadada">A</text>
    <rect x="1101.500" y="200" width="1.200" height="17" fill="#dadada"/>
  </svg>
</div>
<div id="lpanel" class="abs">
  <svg style="left:236px;top:-9px" width="8" height="7" viewBox="0 0 8 7"><path d="M.8.800l2.300 2.400L.8 5.600M4.600.800l2.300 2.400-2.300 2.400" fill="none" stroke="#a0a0a0" stroke-width="1.200"/></svg>
  <div class="tabs"></div>
  <div class="tb on" style="left:1px;width:42px"><div class="t" style="left:8px">图层</div></div>
  <div class="tb" style="left:43px;width:42px"><div class="t" style="left:9px">路径</div></div>
  <div class="tb" style="left:85px;width:40px"><div class="t" style="left:7px">属性</div></div>
  <div class="tb" style="left:125px;width:38px"><div class="t" style="left:7px">色板</div></div>
  <div class="tb" style="left:163px;width:42px"><div class="t" style="left:8px">通道</div></div>
  <svg style="left:233px;top:10px" width="10" height="8" viewBox="0 0 10 8"><path d="M0 .7h10M0 4h10M0 7.300h10" stroke="#9a9a9a" stroke-width="1.200"/></svg>
  <div class="ctl"></div>
  <!-- filter row -->
  <div class="dd" style="left:4px;top:36px;width:86px;height:21px"></div>
  <svg style="left:12px;top:41px" width="11" height="11" viewBox="0 0 11 11"><circle cx="6.500" cy="4.300" r="3.400" fill="none" stroke="#d0d0d0" stroke-width="1.400"/><path d="M4 6.800L.9 10" stroke="#d0d0d0" stroke-width="1.700" stroke-linecap="round"/></svg>
  <div class="lbl t" style="left:27px;top:40px;color:#e4e4e4">类型</div>
  <svg style="left:79px;top:44px" width="8" height="5" stroke="#a4a4a4"><use href="#chev"/></svg>
  <svg style="left:0;top:0" width="251" height="120" viewBox="1115 74 251 120">
    <!-- filter icons -->
    <rect x="1221.700" y="115.600" width="10.800" height="9.200" fill="none" stroke="#d0d0d0" stroke-width="1.200"/>
    <path d="M1223.300 123.300l2.200-3.600 1.600 2 1.500-1.600 2.100 3.200z" fill="#d0d0d0"/>
    <circle cx="1251.400" cy="120.700" r="4.900" fill="none" stroke="#d0d0d0" stroke-width="1.200"/>
    <path d="M1254.900 117.200a4.900 4.900 0 0 1-7 7z" fill="#d0d0d0"/>
    <text x="1276.200" y="125.200" text-anchor="middle" font-family="Liberation Serif,serif" font-weight="bold" font-size="14.200" fill="#d8d8d8">T</text>
    <rect x="1295.500" y="116.300" width="8.400" height="8.400" fill="none" stroke="#d0d0d0" stroke-width="1.100"/>
    <g fill="#d0d0d0"><rect x="1294.200" y="115" width="2.700" height="2.700"/><rect x="1302.500" y="115" width="2.700" height="2.700"/><rect x="1294.200" y="123.300" width="2.700" height="2.700"/><rect x="1302.500" y="123.300" width="2.700" height="2.700"/></g>
    <path d="M1322.500 119.500v-4h3.700l2.500 2.500v7.500h-3.500" fill="none" stroke="#d0d0d0" stroke-width="1.100"/><path d="M1326 115.500v2.700h2.700" fill="none" stroke="#d0d0d0" stroke-width=".9"/>
    <rect x="1318.700" y="121" width="5.800" height="5.800" fill="#d0d0d0"/>
    <rect x="1347.300" y="112.500" width="8" height="16.800" rx="4" fill="#262626" stroke="#4a4a4a" stroke-width="1"/>
    <circle cx="1351.300" cy="116.300" r="4" fill="#d4d4d4"/>
    <!-- opacity / fill underline + chevrons -->
    <rect x="1299" y="157" width="57" height="1" fill="#5a5a5a"/>
    <rect x="1299" y="184" width="57" height="1" fill="#5a5a5a"/>
    <path d="M1346 145.500l3.600 3.700 3.600-3.700M1346 172.300l3.600 3.700 3.600-3.700" fill="none" stroke="#a4a4a4" stroke-width="1"/>
    <!-- lock icons -->
    <rect x="1159" y="169.500" width="11.500" height="11.500" fill="#dcdcdc"/>
    <g fill="#2a2a2a"><rect x="1160.500" y="171" width="2.800" height="2.800"/><rect x="1166.200" y="171" width="2.800" height="2.800"/><rect x="1163.400" y="173.800" width="2.800" height="2.800"/><rect x="1160.500" y="176.700" width="2.800" height="2.800"/><rect x="1166.200" y="176.700" width="2.800" height="2.800"/></g>
    <path d="M1192.600 168.700c.5.400.5 1 .2 1.400l-5 6.900-1.800-1.400 5.300-6.700c.3-.4.900-.5 1.300-.2z" fill="#dcdcdc"/>
    <path d="M1185.500 176.200c1.100.8 1.400 1.900.7 3-.9 1.400-3.300 2.100-6.200 2.100 1.400-1.100 1.500-2.300 2-3.500.5-1.500 2.300-2.400 3.500-1.600z" fill="#dcdcdc"/>
    <use href="#mv" x="1201.800" y="169" width="12.800" height="12.800" fill="#dcdcdc"/>
    <g fill="none" stroke="#dcdcdc" stroke-width="1.300"><path d="M1227.500 169v10.500h9.500M1224 172.500h9.500v9"/></g>
    <path d="M1230 172.500l5-3.500" stroke="#dcdcdc" stroke-width="1" stroke-dasharray="1.200 1"/>
    <rect x="1247.500" y="174.500" width="10.500" height="7" rx="1" fill="#dcdcdc"/>
    <path d="M1250 174.500v-2.200a2.700 2.700 0 0 1 5.400 0v2.200" fill="none" stroke="#dcdcdc" stroke-width="1.500"/><rect x="1252" y="176.500" width="1.500" height="2.500" fill="#303030"/>
  </svg>
  <!-- blend row -->
  <div class="dd" style="left:4px;top:63px;width:118px;height:21px"></div>
  <div class="lbl t" style="left:12px;top:67px;color:#e4e4e4">划分</div>
  <svg style="left:111px;top:71px" width="8" height="5" stroke="#a4a4a4"><use href="#chev"/></svg>
  <div class="lbl t" style="left:129px;top:67px">不透明度:</div>
  <div class="lbl t" style="left:188px;top:67px;color:#e4e4e4;font-size:11.500px">42%</div>
  <!-- lock row -->
  <div class="lbl t" style="left:6px;top:94px;color:#b4b4b4">锁定:</div>
  <div class="lbl t" style="left:154px;top:94px;color:#b4b4b4">填充:</div>
  <div class="lbl t" style="left:188px;top:94px;color:#e4e4e4;font-size:11.500px">100%</div>
  <!-- layers -->
  <div class="row on" style="top:116px">
    <div class="eye"><svg style="left:8px;top:11px" width="14" height="9"><use href="#eye"/></svg></div>
    <svg style="left:30.500px;top:1px" width="37" height="28" viewBox="0 0 38 29" preserveAspectRatio="none">
      <defs><pattern id="ck" width="8" height="8" patternUnits="userSpaceOnUse"><rect width="8" height="8" fill="#fff"/><rect width="4" height="4" fill="#ccc"/><rect x="4" y="4" width="4" height="4" fill="#ccc"/></pattern>
      <filter id="spk" x="0" y="0" width="1" height="1"><feTurbulence type="fractalNoise" baseFrequency="0.9" numOctaves="2" seed="4"/><feColorMatrix values="0 0 0 0 0.150  0 0 0 0 0.150  0 0 0 0 0.150  -9 -9 0 0 8.600"/></filter></defs>
      <rect x="3" y="2.500" width="32" height="24" fill="url(#ck)"/>
      <rect x="3" y="8" width="32" height="13" fill="#fff" opacity=".55"/>
      <rect x="3" y="8" width="32" height="13" filter="url(#spk)"/>
      <path d="M.6 7V.6h6.500M30.900.600h6.500V7M37.400 22v6.400h-6.500M7.100 28.400H.6V22" fill="none" stroke="#f0f0f0" stroke-width="1.200"/>
    </svg>
    <div class="nm t">矩形 1 拷贝</div>
  </div>
  <div class="row" style="top:147px">
    <div class="eye"><svg style="left:8px;top:11px" width="14" height="9"><use href="#eye"/></svg></div>
    <svg style="left:33.700px;top:3.600px" width="31" height="22.800" viewBox="0 0 32 24" preserveAspectRatio="none">
      <defs><linearGradient id="bg2" x1="0" x2="1" y1="0" y2="0"><stop offset="0" stop-color="#2f3541"/><stop offset="1" stop-color="#85939a"/></linearGradient></defs>
      <rect width="32" height="24" fill="url(#ck)"/><rect y="6" width="32" height="12.500" fill="url(#bg2)"/>
    </svg>
    <div class="nm t">矩形 1</div>
  </div>
  <div class="row" style="top:178px">
    <div class="eye"><svg style="left:8px;top:11px" width="14" height="9"><use href="#eye"/></svg></div>
    <div style="left:33.700px;top:3.300px;width:31px;height:23.200px;background:linear-gradient(90deg,#9d9699,#e2dfd8);border:1px solid #8a8a8a"></div>
    <div class="nm t" style="left:77px;font-style:italic;font-size:11.5px">背景</div>
    <svg style="left:206px;top:8px" width="12" height="13" viewBox="0 0 12 13"><rect x=".7" y="5.200" width="10.600" height="7.100" rx=".8" fill="none" stroke="#d0d0d0" stroke-width="1.300"/><path d="M3.200 5V3.600a2.800 2.800 0 0 1 5.600 0V5" fill="none" stroke="#d0d0d0" stroke-width="1.300"/><rect x="5.200" y="7.800" width="1.600" height="2.200" fill="#d0d0d0"/></svg>
  </div>
  <div class="sb"></div>
  <div class="foot"><svg style="left:0;top:0" width="251" height="24" viewBox="1115 703 251 24" fill="none" stroke="#c8c8c8" stroke-width="1.300">
    <path d="M1166 716.500a2.500 2.500 0 0 1 0-5h4M1176 711.500a2.500 2.500 0 0 1 0 5h-4M1168 714h6"/>
    <rect x="1216.500" y="709.500" width="12" height="10"/><circle cx="1222.500" cy="714.500" r="2.800"/>
    <circle cx="1250" cy="714.500" r="5.300"/><path d="M1250 709.200a5.300 5.300 0 0 1 0 10.600z" fill="#c8c8c8"/>
    <path d="M1270.500 710.500h4.500l1.500 1.500h6.500v8h-12.500z"/>
    <path d="M1298.500 709.500h8l3 3v8h-11zM1306.500 709.500v3h3"/>
    <path d="M1326 711.500h10M1329 711.500v-1.500h4v1.500M1327.300 711.500l.7 9h6l.7-9"/>
  </svg>
  <div class="t" style="left:77px;top:3px;font-size:12px;font-style:italic;color:#c8c8c8">fx</div></div>
</div>
<div id="taskbar" class="abs">
  <div style="left:48px;top:0;width:344px;height:9px;background:#2f5178"></div>
  <div style="left:492px;top:0;width:48px;height:9px;background:#1b4a85"></div>
  <div style="left:1261px;top:4.500px;font-size:12px;line-height:12px;color:#fff;white-space:nowrap">21:00</div>
  <div style="left:1361px;top:1px;width:1px;height:8px;background:#7f8ea6"></div>
</div>
<div id="wm" class="abs">头条号 / 阳光下的奔跑者</div>
</body>
</html>
